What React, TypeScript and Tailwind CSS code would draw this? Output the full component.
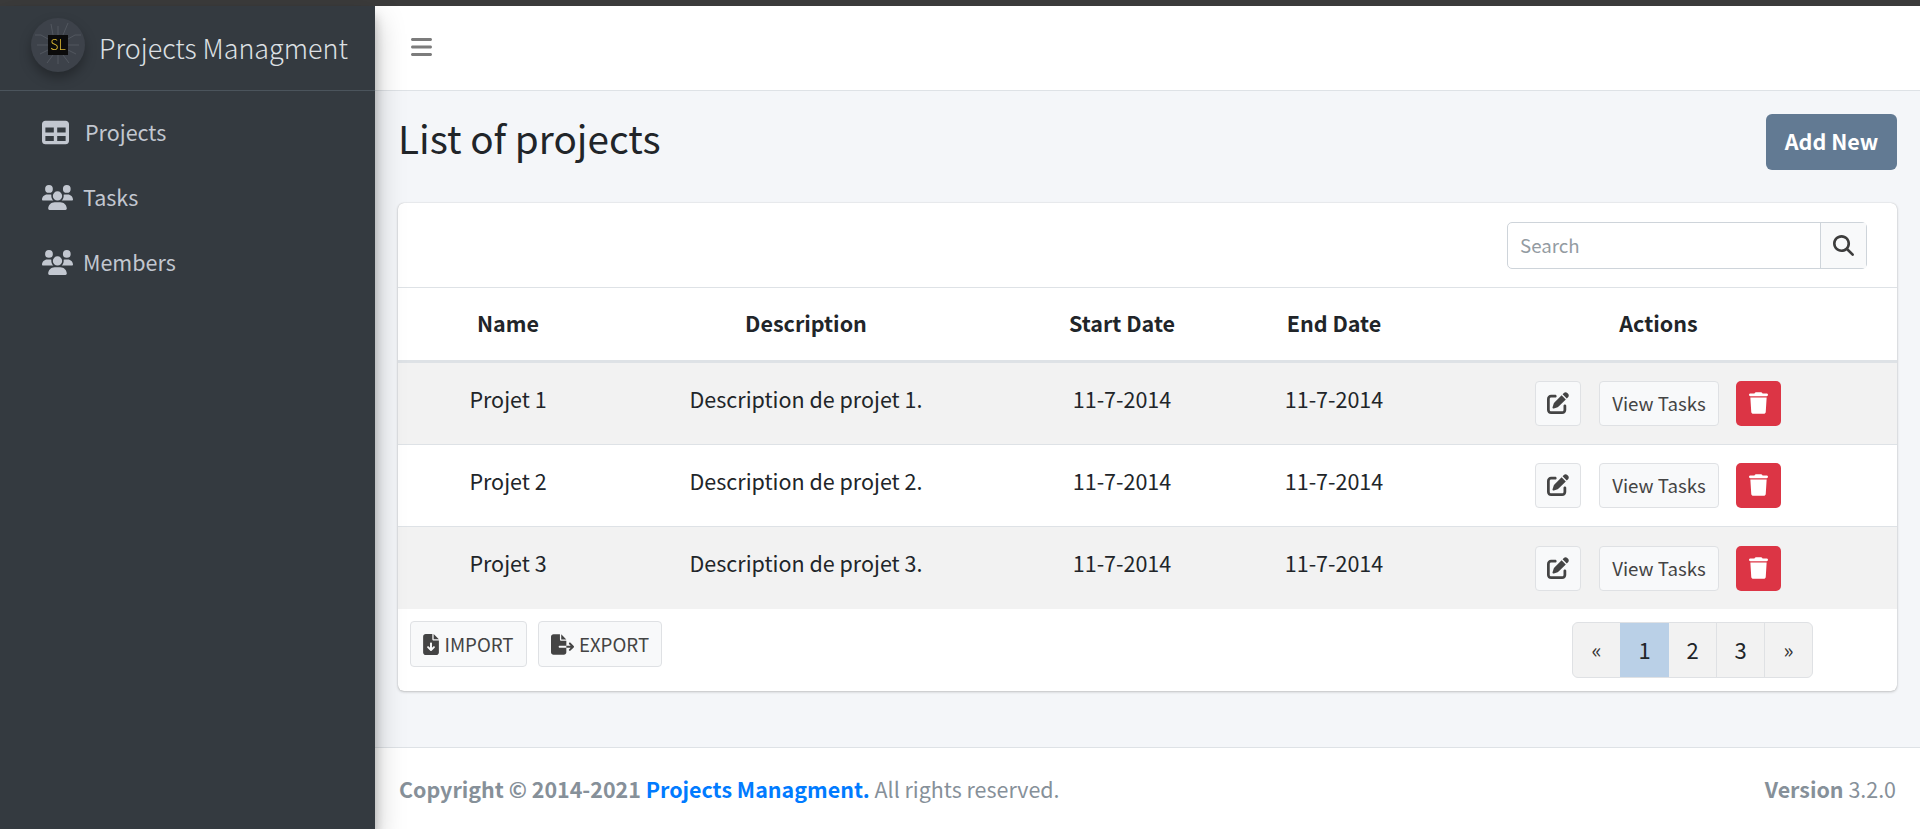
import React from "react";
import { FaBars, FaFileArrowDown, FaFileExport, FaMagnifyingGlass, FaPenToSquare, FaTable, FaTrash, FaUsers } from "react-icons/fa6";

const rows = [1, 2, 3];

function Logo() {
  const lines = [
    "M18 23L11 19H5", "M18 29H7", "M18 34L10 38", "M38 23L45 19H51", "M38 29H49", "M38 34L46 38",
    "M23 19L21 8", "M28 19V10", "M33 19L38 7", "M23 39L17 47", "M28 39V48", "M33 39L39 47",
  ];
  return (
    <svg width="56" height="56" viewBox="0 0 56 56" className="shrink-0 drop-shadow-[0_6px_6px_rgba(0,0,0,0.3)]">
      <circle cx="28" cy="29" r="27" fill="#3d424a" />
      <g stroke="#52575f" strokeWidth="1" fill="none">
        {lines.map((d) => (
          <path key={d} d={d} />
        ))}
      </g>
      <rect x="18" y="19" width="20" height="20" fill="#0b0b0b" />
      <text x="28" y="34" textAnchor="middle" fontSize="14" fontWeight="300" fill="#d9b632" fontFamily="'Noto Sans CJK SC', sans-serif">
        SL
      </text>
    </svg>
  );
}

function NavItem({ icon, label, gap }: { icon: React.ReactNode; label: string; gap: string }) {
  return (
    <div className={`flex h-[65px] items-center pl-[42px] text-[#c2c7d0] ${gap}`}>
      {icon}
      <span className="text-[21.5px] leading-none">{label}</span>
    </div>
  );
}

function LightButton({ children, className }: { children: React.ReactNode; className: string }) {
  return (
    <button className={`flex items-center justify-center rounded-[4px] border border-[#dfe1e4] bg-[#f8f9fa] text-[#444] ${className}`}>
      {children}
    </button>
  );
}

export default function App() {
  return (
    <div className="flex h-[829px] flex-col overflow-hidden bg-[#f4f6f9] font-['Noto_Sans_CJK_SC',sans-serif] text-[#212529]">
      <div className="h-[6px] shrink-0 bg-[#3b3b3b]" />
      <div className="flex min-h-0 flex-1">
        <aside className="z-10 w-[375px] shrink-0 bg-[#343a40] shadow-[0_14px_28px_rgba(0,0,0,0.25),0_10px_10px_rgba(0,0,0,0.22)]">
          <div className="flex h-[85px] items-center border-b border-[#4b545c] pb-[8px] pl-[30px]">
            <Logo />
            <span className="ml-[13px] mt-[8px] text-[26.9px] font-light leading-none text-[#dde0e4]">Projects Managment</span>
          </div>
          <div className="pt-[8.5px]">
            <NavItem icon={<FaTable className="h-[27px] w-[27px]" />} label="Projects" gap="gap-[16px]" />
            <NavItem icon={<FaUsers className="h-[25px] w-[31px]" />} label="Tasks" gap="gap-[10px]" />
            <NavItem icon={<FaUsers className="h-[25px] w-[31px]" />} label="Members" gap="gap-[10px]" />
          </div>
        </aside>

        <main className="flex min-w-0 flex-1 flex-col">
          <nav className="flex h-[85px] shrink-0 items-center border-b border-[#dee2e6] bg-white pb-[3px] pl-[36px] text-[#7c7c7c]">
            <FaBars className="h-[24px] w-[21px]" />
          </nav>

          <section className="min-h-0 flex-1 pl-[23px] pr-[23px]">
            <div className="flex h-[112px] items-start justify-between">
              <h1 className="mt-[22px] text-[38.7px] font-normal leading-[48px]">List of projects</h1>
              <button className="mt-[23px] h-[56px] w-[131px] rounded-[6px] bg-[#627a93] pb-[3px] text-[21.5px] font-bold leading-none text-white">
                Add New
              </button>
            </div>

            <div className="h-[488px] rounded-[6px] bg-white shadow-[0_0_1px_rgba(0,0,0,0.25),0_1px_3px_rgba(0,0,0,0.2)]">
              <div className="flex h-[84.5px] justify-end border-b border-[#dee2e6] pr-[30px] pt-[19px]">
                <div className="flex h-[47px] w-[360px] rounded-[5px] border border-[#ced4da]">
                  <div className="flex-1 pl-[12px] text-[18.7px] leading-[44px] text-[#939ba2]">Search</div>
                  <div className="flex w-[46px] items-center justify-center border-l border-[#ced4da] bg-[#f8f9fa] text-[#3d3d3d]">
                    <FaMagnifyingGlass className="h-[21px] w-[21px]" />
                  </div>
                </div>
              </div>

              <table className="w-full table-fixed border-collapse text-center">
                <colgroup>
                  <col className="w-[220px]" />
                  <col className="w-[376px]" />
                  <col className="w-[256px]" />
                  <col className="w-[168px]" />
                  <col />
                </colgroup>
                <thead>
                  <tr className="h-[74px] border-b-[3px] border-[#dee2e6] text-[21.5px] leading-none">
                    <th className="pb-[3px] font-bold">Name</th>
                    <th className="pb-[3px] font-bold">Description</th>
                    <th className="pb-[3px] font-bold">Start Date</th>
                    <th className="pb-[3px] font-bold">End Date</th>
                    <th className="pb-[3px] pl-[2px] font-bold">Actions</th>
                  </tr>
                </thead>
                <tbody>
                  {rows.map((n) => (
                    <tr key={n} className={`h-[82.5px] border-b border-[#dee2e6] text-[21.5px] leading-none last:border-b-0 ${n % 2 ? "bg-[#f2f2f2]" : "bg-white"}`}>
                      <td className="pb-[10px]">Projet {n}</td>
                      <td className="pb-[10px]">Description de projet {n}.</td>
                      <td className="pb-[10px]">11-7-2014</td>
                      <td className="pb-[10px]">11-7-2014</td>
                      <td>
                        <div className="flex items-center pl-[117px]">
                          <LightButton className="h-[45px] w-[46px]">
                            <FaPenToSquare className="h-[22px] w-[22px]" />
                          </LightButton>
                          <LightButton className="ml-[18px] h-[45px] w-[120px] text-[18.7px] leading-none">View Tasks</LightButton>
                          <button className="ml-[17px] flex h-[45px] w-[45px] items-center justify-center rounded-[5px] bg-[#dc3545] text-white">
                            <FaTrash className="h-[22px] w-[19px]" />
                          </button>
                        </div>
                      </td>
                    </tr>
                  ))}
                </tbody>
              </table>

              <div className="flex items-start justify-between pl-[12px] pr-[84px] pt-[12px]">
                <div className="flex gap-[11px]">
                  <LightButton className="h-[46px] w-[117px] gap-[5px] text-[18.7px] leading-none">
                    <FaFileArrowDown className="h-[21px] w-[16px]" />
                    IMPORT
                  </LightButton>
                  <LightButton className="h-[46px] w-[124px] gap-[5px] text-[18.7px] leading-none">
                    <FaFileExport className="h-[21px] w-[23px]" />
                    EXPORT
                  </LightButton>
                </div>
                <div className="mt-[1px] flex h-[56px] w-[241px] overflow-hidden rounded-[6px] border border-[#dfe1e4] bg-[#f2f2f2] text-center text-[22px] leading-[52px] text-[#212529]">
                  <div className="w-[47px] text-[21px] text-[#333]">«</div>
                  <div className="w-[49px] bg-[#bad0e7]">1</div>
                  <div className="w-[48px] border-r border-[#dfe1e4]">2</div>
                  <div className="w-[48px] border-r border-[#dfe1e4]">3</div>
                  <div className="flex-1 text-[21px] text-[#333]">»</div>
                </div>
              </div>
            </div>
          </section>

          <footer className="flex h-[82px] shrink-0 items-center justify-between border-t border-[#dee2e6] bg-white pl-[24px] pr-[24px] text-[21.45px] leading-none text-[#869099]">
            <div>
              <b className="font-bold">Copyright © 2014-2021 </b>
              <b className="font-bold text-[#007bff]">Projects Managment.</b> All rights reserved.
            </div>
            <div>
              <b className="font-bold">Version</b> 3.2.0
            </div>
          </footer>
        </main>
      </div>
    </div>
  );
}
